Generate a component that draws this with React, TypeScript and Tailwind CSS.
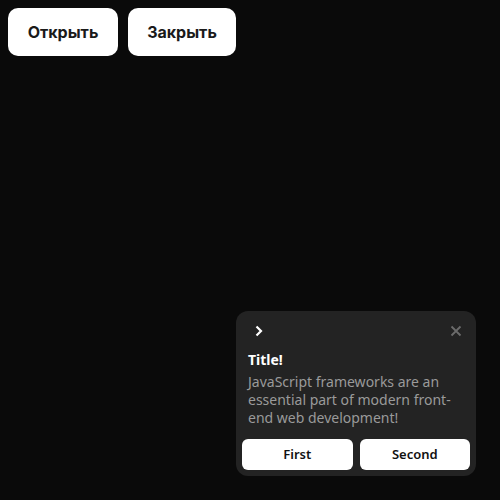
export default function App() {
  return (
    <div className="relative h-[500px] w-[500px] overflow-hidden bg-[#0a0a0a] font-['Noto_Sans',sans-serif]">
      <div className="flex gap-[10px] p-2 font-['Inter',sans-serif]">
        <button className="h-12 w-[110px] rounded-[10px] bg-white text-[16px] font-bold text-[#1a1a1a]">
          Открыть
        </button>
        <button className="h-12 w-[108px] rounded-[10px] bg-white text-[16px] font-bold text-[#1a1a1a]">
          Закрыть
        </button>
      </div>

      <div className="absolute bottom-6 right-6 flex w-[240px] flex-col rounded-xl bg-[#232323] p-1.5">
        <div className="flex items-center justify-between pl-[12px] pr-[8px] pt-[8px]">
          <svg width="10" height="12" viewBox="0 0 10 12" fill="none">
            <path d="M2.5 1.5 L7 6 L2.5 10.5" stroke="white" strokeWidth="2.2" />
          </svg>
          <svg width="12" height="12" viewBox="0 0 12 12" fill="none">
            <path d="M1.5 1.5 L10.5 10.5 M10.5 1.5 L1.5 10.5" stroke="#6b6b6b" strokeWidth="1.8" />
          </svg>
        </div>
        <div className="px-1.5 pt-[14px]">
          <h3 className="text-[14px] font-bold leading-[18px] text-white">Title!</h3>
          <p className="mt-[4px] text-[14px] leading-[18px] text-[#9a9a9a]">
            JavaScript frameworks are an essential part of modern front-end web development!
          </p>
        </div>
        <div className="mt-[12px] flex gap-[7px]">
          <button className="h-[31px] flex-1 rounded-md bg-white text-[13px] font-semibold text-[#111]">
            First
          </button>
          <button className="h-[31px] flex-1 rounded-md bg-white text-[13px] font-semibold text-[#111]">
            Second
          </button>
        </div>
      </div>
    </div>
  );
}
